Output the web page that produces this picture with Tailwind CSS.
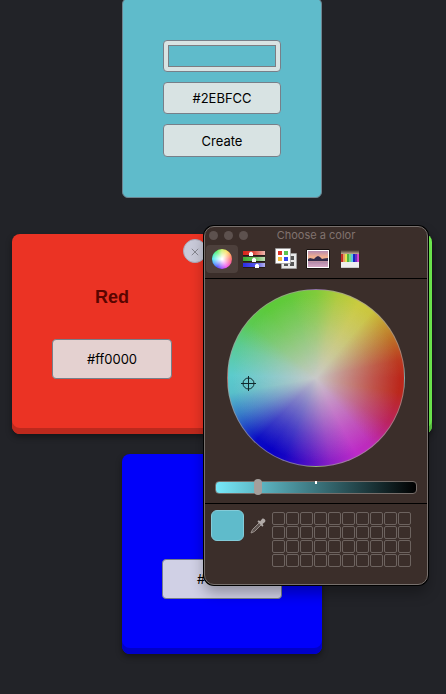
<!DOCTYPE html>
<html lang="en">
<head>
<meta charset="utf-8">
<meta name="viewport" content="width=device-width, initial-scale=1">
<title>Color cards</title>
<script src="https://cdn.jsdelivr.net/npm/@tailwindcss/browser@4"></script>
</head>
<body class="relative min-h-screen overflow-x-hidden bg-[#222328] font-[Inter,'Liberation_Sans',sans-serif] text-[13px] text-black">
<main class="-mt-0.5 flex flex-col items-center gap-9 pr-0.5 pb-10">
  <form class="flex h-50 w-50 flex-col items-center justify-center gap-2.5 rounded-md border border-[#6d8490] bg-[#5fbbcb]">
    <input type="color" value="#5fbbcb" aria-label="Card color" class="h-8 w-[118px] appearance-none rounded border border-[#777f89] bg-[#d8e3e3] p-1 [&::-webkit-color-swatch-wrapper]:p-0 [&::-webkit-color-swatch]:rounded-none [&::-webkit-color-swatch]:border [&::-webkit-color-swatch]:border-[#7d7d82]">
    <input type="text" value="#2EBFCC" aria-label="Hex value" class="h-8 w-[118px] rounded border border-[#777f89] bg-[#d8e3e3] text-center">
    <button type="button" class="h-[33px] w-[118px] rounded border border-[#777f89] bg-[#d8e3e3] pt-[3px]">Create</button>
  </form>

  <section class="flex flex-wrap justify-center gap-5" aria-label="Saved colors">
    <article class="relative flex h-50 w-50 flex-col items-center rounded-lg bg-[#eb3324] pt-[50px] shadow-[inset_0_-6px_0_#bd291d,0_3px_6px_#00000066]">
      <button type="button" aria-label="Delete Red" class="absolute top-[5px] right-[5px] flex size-6 items-center justify-center rounded-full border border-[#a9acbb] bg-[#c9cad9] pt-0.5 text-[#85868f]">
        <svg class="size-2" viewBox="0 0 8 8" fill="none" stroke="currentColor" aria-hidden="true"><path d="M.8.8l6.400 6.400M7.200.8L.8 7.200"/></svg>
      </button>
      <h2 class="font-['Liberation_Sans',Arial,sans-serif] text-lg leading-[26px] font-bold text-[#5a0500]">Red</h2>
      <input type="text" value="#ff0000" aria-label="Red hex value" class="mt-[29px] h-10 w-30 rounded border border-[#777f89] bg-[#e4d1d0] text-center">
    </article>
    <article class="relative flex h-50 w-50 flex-col items-center rounded-lg bg-[#76fb54] pt-[50px] shadow-[inset_0_-6px_0_#60d045,0_3px_6px_#00000066]"></article>
    <article class="relative flex h-50 w-50 flex-col items-center rounded-lg bg-[#0000fa] pt-[105px] shadow-[inset_0_-6px_0_#0000c8,0_3px_6px_#00000066]">
      <input type="text" value="#0000ff" aria-label="Blue hex value" class="h-10 w-30 rounded border border-[#777f89] bg-[#d0d0e5] text-center">
    </article>
  </section>
</main>

<div role="dialog" aria-labelledby="picker-title" class="absolute top-[226px] left-[204px] w-56 rounded-[10px] border border-[#77706d] bg-[#3b2e2a] pb-[17px] shadow-[0_0_0_1px_#000,0_8px_14px_#0000004d]">
  <header class="relative flex h-[18px] items-center justify-center pb-0.5">
    <div class="absolute left-1 flex gap-1.5">
      <button type="button" aria-label="Close" class="size-[9px] rounded-full bg-[#5d514e]"></button>
      <button type="button" aria-label="Minimize" class="size-[9px] rounded-full bg-[#5d514e]"></button>
      <button type="button" aria-label="Zoom" class="size-[9px] rounded-full bg-[#5d514e]"></button>
    </div>
    <h2 id="picker-title" class="text-[11px] leading-4 text-[#81736f]">Choose a color</h2>
  </header>

  <nav class="flex h-[34px] border-b border-black pl-px" aria-label="Picker modes">
    <button type="button" aria-label="Color wheel" class="flex h-7 w-8 items-center justify-center rounded bg-[#4d403c]">
      <span class="size-5 rounded-full bg-[radial-gradient(circle,#fff_5%,#ffffff00_75%),conic-gradient(#c8f060,#ffd850_35deg,#ff5a5a_90deg,#f040f0_150deg,#4040ff_210deg,#40e8f8_270deg,#40f060_325deg,#c8f060)]"></span>
    </button>
    <button type="button" aria-label="Color sliders" class="flex h-7 w-8 items-center justify-center">
      <svg class="h-[18px] w-[22px]" viewBox="0 0 22 18" aria-hidden="true">
        <defs>
          <linearGradient id="r"><stop stop-color="#d92219"/><stop offset=".45" stop-color="#dc4338"/><stop offset="1" stop-color="#edb9b0"/></linearGradient>
          <linearGradient id="g"><stop stop-color="#3dac31"/><stop offset=".5" stop-color="#65be59"/><stop offset="1" stop-color="#bfe0b6"/></linearGradient>
          <linearGradient id="b"><stop stop-color="#292be8"/><stop offset=".6" stop-color="#5658e8"/><stop offset="1" stop-color="#b4b2ed"/></linearGradient>
        </defs>
        <path fill="url(#r)" d="M0 1h22v4H0z"/><path fill="url(#g)" d="M0 7h22v4H0z"/><path fill="url(#b)" d="M0 13h22v4H0z"/>
        <path stroke="#00000066" d="M0 5.500h22M0 11.500h22M0 17.500h22"/>
        <g fill="#fff"><path d="M8 1.500l2 1.500v3H6V3z"/><path d="M11 7.500l2 1.500v3H9V9z"/><path d="M14 13.500l2 1.500v3h-4v-3z"/></g>
      </svg>
    </button>
    <button type="button" aria-label="Color palettes" class="flex h-7 w-8 items-center justify-center">
      <svg class="h-[22px] w-[22px]" viewBox="0 0 22 22" aria-hidden="true">
        <path fill="#e8e8e8" stroke="#aaa" stroke-width=".6" d="M6.500 5.500h15v15h-15z"/>
        <path fill="#555" d="M15 8h4v4h-4zM15 14h4v4h-4zM9 14h4v4H9z"/>
        <path fill="#fff" stroke="#999" stroke-width=".7" d="M.5.500h15v15H.5z"/>
        <path fill="#dd3329" d="M3 3h4v4H3z"/><path fill="#5ec350" d="M9 3h4v4H9z"/><path fill="#f3bd3d" d="M3 9h4v4H3z"/><path fill="#3648ed" d="M9 9h4v4H9z"/>
      </svg>
    </button>
    <button type="button" aria-label="Image palettes" class="flex h-7 w-8 items-center justify-center">
      <svg class="h-5 w-6" viewBox="0 0 24 20" aria-hidden="true">
        <defs><linearGradient id="s" x2="0" y2="1"><stop stop-color="#b78bb1"/><stop offset=".35" stop-color="#efad90"/><stop offset=".56" stop-color="#f0b890"/><stop offset=".68" stop-color="#b088a8"/><stop offset="1" stop-color="#d8a8c6"/></linearGradient></defs>
        <path fill="#fff" stroke="#17110f" d="M.5.500h23v19H.5z"/>
        <path fill="url(#s)" d="M2 2h20v16H2z"/>
        <path fill="#332b4b" d="M2 10l2-1 2 .5 2 .5 2-2 2-1 2 1 2 2 2-.5 4-.5v3H2z"/>
      </svg>
    </button>
    <button type="button" aria-label="Pencils" class="flex h-7 w-8 items-center justify-center">
      <svg class="h-5 w-[18px]" viewBox="0 0 18 20" aria-hidden="true">
        <path fill="#ead2b0" d="M0 6L1 1l1 5 1-5 1 5 1-5 1 5 1-5 1 5 1-5 1 5 1-5 1 5 1-5 1 5 1-5 1 5 1-5 1 5z"/>
        <path fill="#c9302b" d="M0 5h2v8H0z"/><path fill="#efa46a" d="M2 5h2v8H2z"/><path fill="#f1ee53" d="M4 5h2v8H4z"/><path fill="#55bd46" d="M6 5h2v8H6z"/><path fill="#7ce48f" d="M8 5h2v8H8z"/><path fill="#63cee9" d="M10 5h2v8h-2z"/><path fill="#1527cf" d="M12 5h2v8h-2z"/><path fill="#6537c7" d="M14 5h2v8h-2z"/><path fill="#dc45d8" d="M16 5h2v8h-2z"/>
        <path stroke="#00000033" stroke-width=".5" d="M2 5v8M4 5v8M6 5v8M8 5v8M10 5v8M12 5v8M14 5v8M16 5v8"/>
        <path fill="#eee" d="M0 13h18v6H0z"/><path fill="#ccc" d="M0 18h18v1H0z"/>
      </svg>
    </button>
  </nav>

  <div class="flex flex-col items-center border-b border-black pt-2.5 pb-[9px]">
    <div class="relative size-[178px] rounded-full border border-[#a39b98]/70 bg-[radial-gradient(circle_closest-side,#c9c9c9,#c9c9c9a6_30%,#c9c9c947_65%,#c9c9c900_95%),conic-gradient(#80cb3b,#b0cb3e_15deg,#cbcb40_30deg,#cbc540_40deg,#bd7028_63deg,#bb3a20_78deg,#bb281c_90deg,#bb281c_100deg,#bb2460_122deg,#bd2bb8_140deg,#bd2bc8_152deg,#8c20c6_170deg,#5010c4_185deg,#1404c4_202deg,#0800c4_212deg,#0a0cc4_224deg,#387fc8_245deg,#58c0ca_260deg,#5ccbcc_272deg,#5bcb94_293deg,#5cca50_310deg,#5cca3a_325deg,#62ca3a_342deg,#80cb3b)]">
      <svg class="absolute top-[86px] left-[13px] size-[15px]" viewBox="0 0 15 15" fill="none" stroke="#10282c" aria-hidden="true"><circle cx="7.500" cy="7.500" r="5.500"/><path d="M7.500 0v15M0 7.500h15"/></svg>
    </div>
    <div class="relative mt-3.5 h-[13px] w-[202px]">
      <div class="absolute inset-0 rounded border border-[#766d69] bg-[linear-gradient(to_right,#77e9fa,#000)]"></div>
      <span class="absolute top-0 left-[100px] h-[3px] w-0.5 bg-white"></span>
      <input type="range" min="0" max="194" value="39" aria-label="Brightness" class="absolute inset-x-0 -top-0.5 h-4 w-full appearance-none bg-transparent [&::-webkit-slider-thumb]:h-4 [&::-webkit-slider-thumb]:w-2 [&::-webkit-slider-thumb]:appearance-none [&::-webkit-slider-thumb]:rounded [&::-webkit-slider-thumb]:bg-[#a59f9c]">
    </div>
  </div>

  <div class="flex items-start pt-1.5 pl-1.5">
    <div class="h-[31px] w-[33px] rounded-md border border-[#83cbd8] bg-[#5fbbcb]"></div>
    <button type="button" aria-label="Pick color from screen" class="mt-2 ml-1.5 size-4">
      <svg class="size-4" viewBox="0 0 16 16" aria-hidden="true">
        <path fill="#5f5551" stroke="#9a918d" d="M9 5L2.500 11.500 1 15l3.500-1.500L11 7"/>
        <path fill="#b1aaa7" d="M7.500 3.500l1.200-1.200 1.500 1 2-2.500C13.500-.5 16.500 2 15 4l-2.500 2 1 1.500-1.200 1.200z"/>
      </svg>
    </button>
    <div class="mt-0.5 ml-1.5 grid grid-cols-10 gap-px" aria-label="Saved swatches">
      <span class="size-[13px] rounded-xs border border-[#6d635f]"></span><span class="size-[13px] rounded-xs border border-[#6d635f]"></span><span class="size-[13px] rounded-xs border border-[#6d635f]"></span><span class="size-[13px] rounded-xs border border-[#6d635f]"></span><span class="size-[13px] rounded-xs border border-[#6d635f]"></span><span class="size-[13px] rounded-xs border border-[#6d635f]"></span><span class="size-[13px] rounded-xs border border-[#6d635f]"></span><span class="size-[13px] rounded-xs border border-[#6d635f]"></span><span class="size-[13px] rounded-xs border border-[#6d635f]"></span><span class="size-[13px] rounded-xs border border-[#6d635f]"></span>
      <span class="size-[13px] rounded-xs border border-[#6d635f]"></span><span class="size-[13px] rounded-xs border border-[#6d635f]"></span><span class="size-[13px] rounded-xs border border-[#6d635f]"></span><span class="size-[13px] rounded-xs border border-[#6d635f]"></span><span class="size-[13px] rounded-xs border border-[#6d635f]"></span><span class="size-[13px] rounded-xs border border-[#6d635f]"></span><span class="size-[13px] rounded-xs border border-[#6d635f]"></span><span class="size-[13px] rounded-xs border border-[#6d635f]"></span><span class="size-[13px] rounded-xs border border-[#6d635f]"></span><span class="size-[13px] rounded-xs border border-[#6d635f]"></span>
      <span class="size-[13px] rounded-xs border border-[#6d635f]"></span><span class="size-[13px] rounded-xs border border-[#6d635f]"></span><span class="size-[13px] rounded-xs border border-[#6d635f]"></span><span class="size-[13px] rounded-xs border border-[#6d635f]"></span><span class="size-[13px] rounded-xs border border-[#6d635f]"></span><span class="size-[13px] rounded-xs border border-[#6d635f]"></span><span class="size-[13px] rounded-xs border border-[#6d635f]"></span><span class="size-[13px] rounded-xs border border-[#6d635f]"></span><span class="size-[13px] rounded-xs border border-[#6d635f]"></span><span class="size-[13px] rounded-xs border border-[#6d635f]"></span>
      <span class="size-[13px] rounded-xs border border-[#6d635f]"></span><span class="size-[13px] rounded-xs border border-[#6d635f]"></span><span class="size-[13px] rounded-xs border border-[#6d635f]"></span><span class="size-[13px] rounded-xs border border-[#6d635f]"></span><span class="size-[13px] rounded-xs border border-[#6d635f]"></span><span class="size-[13px] rounded-xs border border-[#6d635f]"></span><span class="size-[13px] rounded-xs border border-[#6d635f]"></span><span class="size-[13px] rounded-xs border border-[#6d635f]"></span><span class="size-[13px] rounded-xs border border-[#6d635f]"></span><span class="size-[13px] rounded-xs border border-[#6d635f]"></span>
    </div>
  </div>
</div>
</body>
</html>
